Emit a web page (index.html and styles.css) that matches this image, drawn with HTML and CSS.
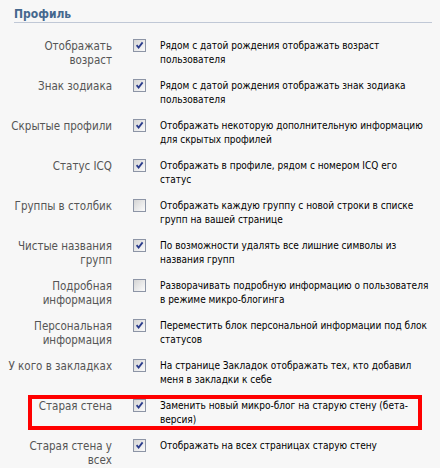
FILE: index.html
```html
<!DOCTYPE html>
<html lang="ru">
<head>
<meta charset="utf-8">
<title>Профиль</title>
<link rel="stylesheet" href="styles.css">
</head>
<body>
<div class="page">
  <h2 class="section-title">Профиль</h2>
  <div class="settings">
    <div class="row">
      <div class="label">Отображать<br>возраст</div>
      <div class="check-cell"><span class="cb checked"><svg viewBox="0 0 11 11"><path d="M2.6 5.2 L4.6 7.6 L8.6 2.4"/></svg></span></div>
      <div class="desc">Рядом с датой рождения отображать возраст<br>пользователя</div>
    </div>
    <div class="row">
      <div class="label">Знак зодиака</div>
      <div class="check-cell"><span class="cb checked"><svg viewBox="0 0 11 11"><path d="M2.6 5.2 L4.6 7.6 L8.6 2.4"/></svg></span></div>
      <div class="desc">Рядом с датой рождения отображать знак зодиака<br>пользователя</div>
    </div>
    <div class="row">
      <div class="label">Скрытые профили</div>
      <div class="check-cell"><span class="cb checked"><svg viewBox="0 0 11 11"><path d="M2.6 5.2 L4.6 7.6 L8.6 2.4"/></svg></span></div>
      <div class="desc">Отображать некоторую дополнительную информацию<br>для скрытых профилей</div>
    </div>
    <div class="row">
      <div class="label">Статус ICQ</div>
      <div class="check-cell"><span class="cb checked"><svg viewBox="0 0 11 11"><path d="M2.6 5.2 L4.6 7.6 L8.6 2.4"/></svg></span></div>
      <div class="desc">Отображать в профиле, рядом с номером ICQ его<br>статус</div>
    </div>
    <div class="row">
      <div class="label">Группы в столбик</div>
      <div class="check-cell"><span class="cb"></span></div>
      <div class="desc">Отображать каждую группу с новой строки в списке<br>групп на вашей странице</div>
    </div>
    <div class="row">
      <div class="label">Чистые названия<br>групп</div>
      <div class="check-cell"><span class="cb checked"><svg viewBox="0 0 11 11"><path d="M2.6 5.2 L4.6 7.6 L8.6 2.4"/></svg></span></div>
      <div class="desc">По возможности удалять все лишние символы из<br>названия групп</div>
    </div>
    <div class="row">
      <div class="label">Подробная<br>информация</div>
      <div class="check-cell"><span class="cb"></span></div>
      <div class="desc">Разворачивать подробную информацию о пользователя<br>в режиме микро-блогинга</div>
    </div>
    <div class="row">
      <div class="label">Персональная<br>информация</div>
      <div class="check-cell"><span class="cb checked"><svg viewBox="0 0 11 11"><path d="M2.6 5.2 L4.6 7.6 L8.6 2.4"/></svg></span></div>
      <div class="desc">Переместить блок персональной информации под блок<br>статусов</div>
    </div>
    <div class="row">
      <div class="label">У кого в закладках</div>
      <div class="check-cell"><span class="cb checked"><svg viewBox="0 0 11 11"><path d="M2.6 5.2 L4.6 7.6 L8.6 2.4"/></svg></span></div>
      <div class="desc">На странице Закладок отображать тех, кто добавил<br>меня в закладки к себе</div>
    </div>
    <div class="row highlighted">
      <div class="label">Старая стена</div>
      <div class="check-cell"><span class="cb checked"><svg viewBox="0 0 11 11"><path d="M2.6 5.2 L4.6 7.6 L8.6 2.4"/></svg></span></div>
      <div class="desc">Заменить новый микро-блог на старую стену (бета-<br>версия)</div>
      <span class="highlight-frame"></span>
    </div>
    <div class="row">
      <div class="label">Старая стена у<br>всех</div>
      <div class="check-cell"><span class="cb checked"><svg viewBox="0 0 11 11"><path d="M2.6 5.2 L4.6 7.6 L8.6 2.4"/></svg></span></div>
      <div class="desc">Отображать на всех страницах старую стену</div>
    </div>
  </div>
</div>
</body>
</html>
```

FILE: styles.css
```css
html, body {
  margin: 0;
  padding: 0;
  background: #f7f7f7;
}

body {
  font-family: "DejaVu Sans Condensed", "Liberation Sans", sans-serif;
  font-size: 10px;
  line-height: 14px;
  color: #000;
}

.page {
  padding-top: 6px;
  width: 440px;
}

.section-title {
  margin: 0 8px 10px 14px;
  font-size: 12px;
  line-height: 16px;
  font-weight: bold;
  color: #45688e;
  border-bottom: 1px solid #c0c8d6;
}

.settings {
  display: flex;
  flex-direction: column;
}

.row {
  display: grid;
  grid-template-columns: 112px 48px 1fr;
  padding: 6px 0;
  height: 28px;
}

.label {
  text-align: right;
  font-size: 11.5px;
  color: #555;
  white-space: nowrap;
}

.check-cell {
  padding-left: 21px;
}

.cb {
  display: block;
  box-sizing: border-box;
  width: 13px;
  height: 13px;
  border: 1px solid #8d95a6;
  background: linear-gradient(135deg, #d4d4d4 0%, #e6e6e6 45%, #fbfbfb 100%);
}

.cb svg {
  display: block;
  width: 11px;
  height: 11px;
}

.cb svg path {
  fill: none;
  stroke: #2a3c8c;
  stroke-width: 1.8;
  stroke-linecap: butt;
  stroke-linejoin: miter;
}

.desc {
  white-space: nowrap;
  color: #000;
}

.highlighted {
  position: relative;
}

.highlight-frame {
  position: absolute;
  left: 28px;
  right: 18px;
  top: 2px;
  bottom: 3px;
  border: 4px solid #ff0000;
  pointer-events: none;
}
```
